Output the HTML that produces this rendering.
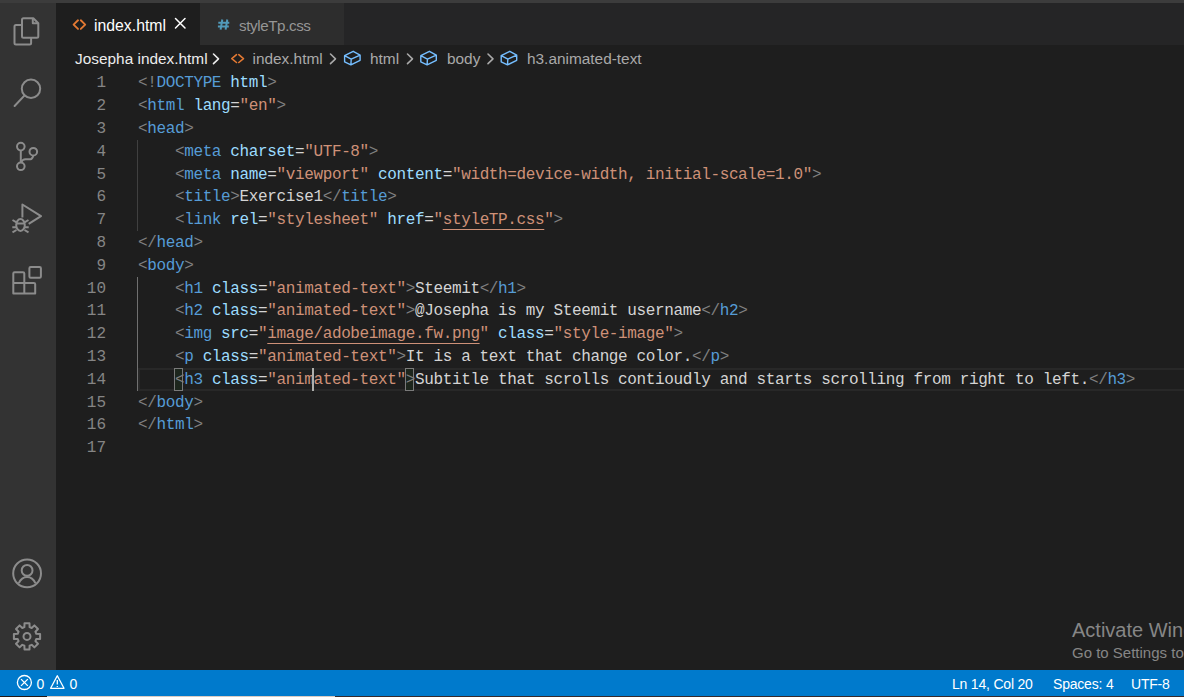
<!DOCTYPE html>
<html><head><meta charset="utf-8">
<style>
*{margin:0;padding:0;box-sizing:border-box}
html,body{width:1184px;height:697px;overflow:hidden;background:#1e1e1e;font-family:"Liberation Sans",sans-serif}
.abs{position:absolute}
#top{left:0;top:0;width:1184px;height:3px;background:#3c3c3c}
#act{left:0;top:3px;width:56px;height:667px;background:#333333}
#tabs{left:56px;top:3px;width:1128px;height:42px;background:#252526}
#tab1{left:56px;top:3px;width:144px;height:42px;background:#1e1e1e}
#tab2{left:200px;top:3px;width:144px;height:42px;background:#2d2d2d}
.ui{font-size:15.4px;white-space:pre;line-height:20px}
#status{left:0;top:670px;width:1184px;height:26px;background:#007acc}
#sbot{left:0;top:696px;width:1184px;height:1px;background:#1e1e1e}
.code{font-family:"Liberation Mono",monospace;font-size:16px;letter-spacing:-0.37px;white-space:pre;line-height:22.8px;height:22.8px;color:#d4d4d4}
.ln{left:60px;width:46px;text-align:right;color:#858585;letter-spacing:0}
.cur-ln{color:#858585}
.l{left:138px}
.g{color:#808080}.b{color:#569cd6}.a{color:#9cdcfe}.s{color:#ce9178}
.u{text-decoration:underline;text-underline-offset:5px;text-decoration-thickness:1px}
.guide{width:1px;background:#404040}
.cur{display:inline-block;width:0;height:0;position:relative}
.cur::after{content:"";position:absolute;left:-1px;top:-17px;width:2px;height:23px;background:#aeafad}
.hl{left:138px;width:1046px;border:2px solid #282828;border-right:0}
.bm{background:#1d261d;border:1px solid #7a7a7a}
.aguide{width:1px;background:#707070}
.st{top:675px;font-size:14px;letter-spacing:-0.2px;color:#ffffff;white-space:pre;line-height:18px}
.act{color:#868686;white-space:pre;line-height:1.15}

</style></head><body>
<div id="top" class="abs"></div>
<div id="act" class="abs"></div>
<div id="tabs" class="abs"></div>
<svg class="abs" style="left:0;top:0" width="56" height="697" viewBox="0 0 56 697" fill="none" stroke="#8c8c8c" stroke-width="2" stroke-linejoin="round">
<!-- explorer -->
<path d="M22 36.2 V19.7 Q22 18.2 23.5 18.2 H33.3 L38.3 23.2 V36.2 Q38.3 37.7 36.8 37.7 H23.5 Q22 37.7 22 36.2 Z"/>
<path d="M32.8 18.5 V23.2 H38"/>
<path d="M22 25 H16 Q14.5 25 14.5 26.5 V43.1 Q14.5 44.6 16 44.6 H29.6 Q31.1 44.6 31.1 43.1 V37.7"/>
<!-- search -->
<circle cx="31" cy="88.8" r="9.2"/>
<path d="M24.6 95.4 L14.6 106" stroke-linecap="round"/>
<!-- scm -->
<circle cx="20.8" cy="146.6" r="3.8"/>
<circle cx="20.8" cy="166.3" r="3.8"/>
<circle cx="33.3" cy="151.7" r="3.8"/>
<path d="M20.8 150.4 V162.5"/>
<path d="M21.2 162.3 Q22.5 159.2 25.5 159.2 H30.5 Q32.4 159.2 33.3 155.5"/>
<!-- debug -->
<path d="M22.4 217.5 V204.5 L41 216.1 L28.7 223.8"/>
<ellipse cx="20.5" cy="225" rx="4.3" ry="5.9"/>
<path d="M16.4 223.6 H24.6 M12.5 220 L16.5 222.3 M28.5 220 L24.5 222.3 M12.3 227.2 H16.3 M28.7 227.2 H24.7 M12.5 232.3 L16.5 230 M28.5 232.3 L24.5 230"/>
<!-- extensions -->
<path d="M13.3 273.5 Q13.3 272.2 14.6 272.2 H23 Q24.3 272.2 24.3 273.5 V283 H33.9 Q35.2 283 35.2 284.3 V293.5 H13.3 Z"/>
<path d="M24.3 283 V293.5 M13.3 283 H24.3"/>
<rect x="29.4" y="267" width="11.5" height="10.7" rx="1.3"/>
<!-- account -->
<circle cx="27.1" cy="573.4" r="13.9"/>
<circle cx="27.1" cy="570.4" r="5.4"/>
<path d="M18.8 583.2 Q21.5 577 27.1 577 Q32.7 577 35.4 583.2"/>
<!-- gear -->
<path d="M24.4 627.1 L24.5 623.3 L29.5 623.3 L29.6 627.1 L31.7 628.0 L34.4 625.4 L38.0 629.0 L35.4 631.7 L36.3 633.8 L40.1 633.9 L40.1 638.9 L36.3 639.0 L35.4 641.1 L38.0 643.8 L34.4 647.4 L31.7 644.8 L29.6 645.7 L29.5 649.5 L24.5 649.5 L24.4 645.7 L22.3 644.8 L19.6 647.4 L16.0 643.8 L18.6 641.1 L17.7 639.0 L13.9 638.9 L13.9 633.9 L17.7 633.8 L18.6 631.7 L16.0 629.0 L19.6 625.4 L22.3 628.0 Z"/>
<circle cx="27" cy="636.4" r="3.5"/>
</svg>
<div id="tab1" class="abs"></div>
<div id="tab2" class="abs"></div>

<div class="abs ui" style="left:94px;top:16px;font-size:15.8px;color:#ffffff">index.html</div>
<div class="abs ui" style="left:239px;top:16px;font-size:15.2px;letter-spacing:-0.4px;color:#969696">styleTp.css</div>
<div class="abs ui" style="left:75px;top:48.6px;color:#ececec">Josepha index.html</div>
<div class="abs ui" style="left:252.5px;top:48.8px;color:#a9a9a9">index.html</div>
<div class="abs ui" style="left:370px;top:48.8px;color:#a9a9a9">html</div>
<div class="abs ui" style="left:447px;top:48.8px;color:#a9a9a9">body</div>
<div class="abs ui" style="left:527px;top:48.8px;color:#a9a9a9">h3.animated-text</div>
<svg class="abs" style="left:0;top:0" width="700" height="70" viewBox="0 0 700 70" fill="none" stroke-width="1.6" stroke-linecap="round" stroke-linejoin="round">
<path d="M78 20.3 L73.6 24.6 L78 28.9 M80.8 20.3 L85.2 24.6 L80.8 28.9" stroke="#e37933" stroke-width="1.9"/>
<path d="M222.3 19.5 L220.6 29.6 M227.3 19.5 L225.6 29.6 M218.3 22.8 H229.3 M217.9 26.5 H228.8" stroke="#519aba" stroke-width="2" stroke-linecap="butt"/>
<path d="M175.5 18.5 L185 28 M185 18.5 L175.5 28" stroke="#ffffff" stroke-width="1.5"/>
<path d="M236.5 54.7 L231.8 58.6 L236.5 62.5 M238.8 54.7 L243.5 58.6 L238.8 62.5" stroke="#e37933" stroke-width="1.6"/>
<path d="M213.5 54 L218.5 58.8 L213.5 63.6" stroke="#ececec"/><path d="M330.5 54 L335.5 58.8 L330.5 63.6" stroke="#a9a9a9"/><path d="M407.5 54 L412.5 58.8 L407.5 63.6" stroke="#a9a9a9"/><path d="M488.0 54 L493.0 58.8 L488.0 63.6" stroke="#a9a9a9"/>
<g stroke="#75beff" stroke-width="1.4"><path d="M353.2 51.3 L360.1 55.2 L360.1 60.3 L350.9 64.9 L344.6 61.8 L344.6 55.7 Z M344.6 55.7 L351.2 59.2 L360.1 55.2 M351.2 59.2 L350.9 64.9"/><path d="M429.4 51.3 L436.3 55.2 L436.3 60.3 L427.1 64.9 L420.8 61.8 L420.8 55.7 Z M420.8 55.7 L427.4 59.2 L436.3 55.2 M427.4 59.2 L427.1 64.9"/><path d="M509.8 51.3 L516.7 55.2 L516.7 60.3 L507.5 64.9 L501.2 61.8 L501.2 55.7 Z M501.2 55.7 L507.8 59.2 L516.7 55.2 M507.8 59.2 L507.5 64.9"/></g>
</svg>

<div class="abs guide" style="left:137px;top:140px;height:91px"></div>
<div class="abs hl" style="top:368px;height:23px"></div>
<div class="abs aguide" style="left:137px;top:277px;height:114px"></div>
<div class="abs bm" style="left:174px;top:368px;width:9px;height:23px"></div>
<div class="abs bm" style="left:405px;top:368px;width:9px;height:23px"></div>

<div class="abs code ln" style="top:72.4px">1</div>
<div class="abs code ln" style="top:95.2px">2</div>
<div class="abs code ln" style="top:118px">3</div>
<div class="abs code ln" style="top:140.8px">4</div>
<div class="abs code ln" style="top:163.6px">5</div>
<div class="abs code ln" style="top:186.4px">6</div>
<div class="abs code ln" style="top:209.2px">7</div>
<div class="abs code ln" style="top:232px">8</div>
<div class="abs code ln" style="top:254.8px">9</div>
<div class="abs code ln" style="top:277.6px">10</div>
<div class="abs code ln" style="top:300.4px">11</div>
<div class="abs code ln" style="top:323.2px">12</div>
<div class="abs code ln" style="top:346px">13</div>
<div class="abs code ln cur-ln" style="top:368.8px">14</div>
<div class="abs code ln" style="top:391.6px">15</div>
<div class="abs code ln" style="top:414.4px">16</div>
<div class="abs code ln" style="top:437.2px">17</div>
<div class="abs code l" style="top:72.4px"><span class="g">&lt;!</span><span class="b">DOCTYPE</span> <span class="a">html</span><span class="g">&gt;</span></div>
<div class="abs code l" style="top:95.2px"><span class="g">&lt;</span><span class="b">html</span> <span class="a">lang</span>=<span class="s">"en"</span><span class="g">&gt;</span></div>
<div class="abs code l" style="top:118px"><span class="g">&lt;</span><span class="b">head</span><span class="g">&gt;</span></div>
<div class="abs code l" style="top:140.8px">    <span class="g">&lt;</span><span class="b">meta</span> <span class="a">charset</span>=<span class="s">"UTF-8"</span><span class="g">&gt;</span></div>
<div class="abs code l" style="top:163.6px">    <span class="g">&lt;</span><span class="b">meta</span> <span class="a">name</span>=<span class="s">"viewport"</span> <span class="a">content</span>=<span class="s">"width=device-width, initial-scale=1.0"</span><span class="g">&gt;</span></div>
<div class="abs code l" style="top:186.4px">    <span class="g">&lt;</span><span class="b">title</span><span class="g">&gt;</span>Exercise1<span class="g">&lt;/</span><span class="b">title</span><span class="g">&gt;</span></div>
<div class="abs code l" style="top:209.2px">    <span class="g">&lt;</span><span class="b">link</span> <span class="a">rel</span>=<span class="s">"stylesheet"</span> <span class="a">href</span>=<span class="s">"<span class="u">styleTP.css</span>"</span><span class="g">&gt;</span></div>
<div class="abs code l" style="top:232px"><span class="g">&lt;/</span><span class="b">head</span><span class="g">&gt;</span></div>
<div class="abs code l" style="top:254.8px"><span class="g">&lt;</span><span class="b">body</span><span class="g">&gt;</span></div>
<div class="abs code l" style="top:277.6px">    <span class="g">&lt;</span><span class="b">h1</span> <span class="a">class</span>=<span class="s">"animated-text"</span><span class="g">&gt;</span>Steemit<span class="g">&lt;/</span><span class="b">h1</span><span class="g">&gt;</span></div>
<div class="abs code l" style="top:300.4px">    <span class="g">&lt;</span><span class="b">h2</span> <span class="a">class</span>=<span class="s">"animated-text"</span><span class="g">&gt;</span>@Josepha is my Steemit username<span class="g">&lt;/</span><span class="b">h2</span><span class="g">&gt;</span></div>
<div class="abs code l" style="top:323.2px">    <span class="g">&lt;</span><span class="b">img</span> <span class="a">src</span>=<span class="s">"<span class="u">image/adobeimage.fw.png</span>"</span> <span class="a">class</span>=<span class="s">"style-image"</span><span class="g">&gt;</span></div>
<div class="abs code l" style="top:346px">    <span class="g">&lt;</span><span class="b">p</span> <span class="a">class</span>=<span class="s">"animated-text"</span><span class="g">&gt;</span>It is a text that change color.<span class="g">&lt;/</span><span class="b">p</span><span class="g">&gt;</span></div>
<div class="abs code l" style="top:368.8px">    <span class="g">&lt;</span><span class="b">h3</span> <span class="a">class</span>=<span class="s">"animated-text"</span><span class="g">&gt;</span>Subtitle that scrolls contioudly and starts scrolling from right to left.<span class="g">&lt;/</span><span class="b">h3</span><span class="g">&gt;</span></div>
<div class="abs code l" style="top:391.6px"><span class="g">&lt;/</span><span class="b">body</span><span class="g">&gt;</span></div>
<div class="abs code l" style="top:414.4px"><span class="g">&lt;/</span><span class="b">html</span><span class="g">&gt;</span></div>
<div class="abs" style="left:312px;top:368px;width:2px;height:23px;background:#aeafad"></div>

<div id="status" class="abs"></div>
<div id="sbot" class="abs"></div>
%STATUS%
<div class="abs" style="left:0;top:696px;width:47px;height:1px;background:#241814"></div>
<div class="abs" style="left:47px;top:696px;width:288px;height:1px;background:#d8cbc3"></div>
<div class="abs" style="left:335px;top:696px;width:849px;height:1px;background:#352a2c"></div>
<div class="abs st" style="left:952px">Ln 14, Col 20</div>
<div class="abs st" style="left:1053px">Spaces: 4</div>
<div class="abs st" style="left:1131px">UTF-8</div>
<div class="abs st" style="left:36.5px">0</div>
<div class="abs st" style="left:69.5px">0</div>
<svg class="abs" style="left:0;top:670px" width="90" height="26" viewBox="0 670 90 26" fill="none" stroke="#ffffff" stroke-width="1.3">
<circle cx="24.4" cy="682.5" r="7"/>
<path d="M21 679.1 L27.8 685.9 M27.8 679.1 L21 685.9"/>
<path d="M57.3 675.8 L50.6 688.3 H64 Z" stroke-linejoin="round"/>
<path d="M57.3 680 V684.6 M57.3 686 V687"/>
</svg>
<div class="abs act" style="left:1072px;top:619px;font-size:20px">Activate Windows</div>
<div class="abs act" style="left:1072px;top:643.5px;font-size:15px">Go to Settings to activate Windows.</div>

</body></html>
